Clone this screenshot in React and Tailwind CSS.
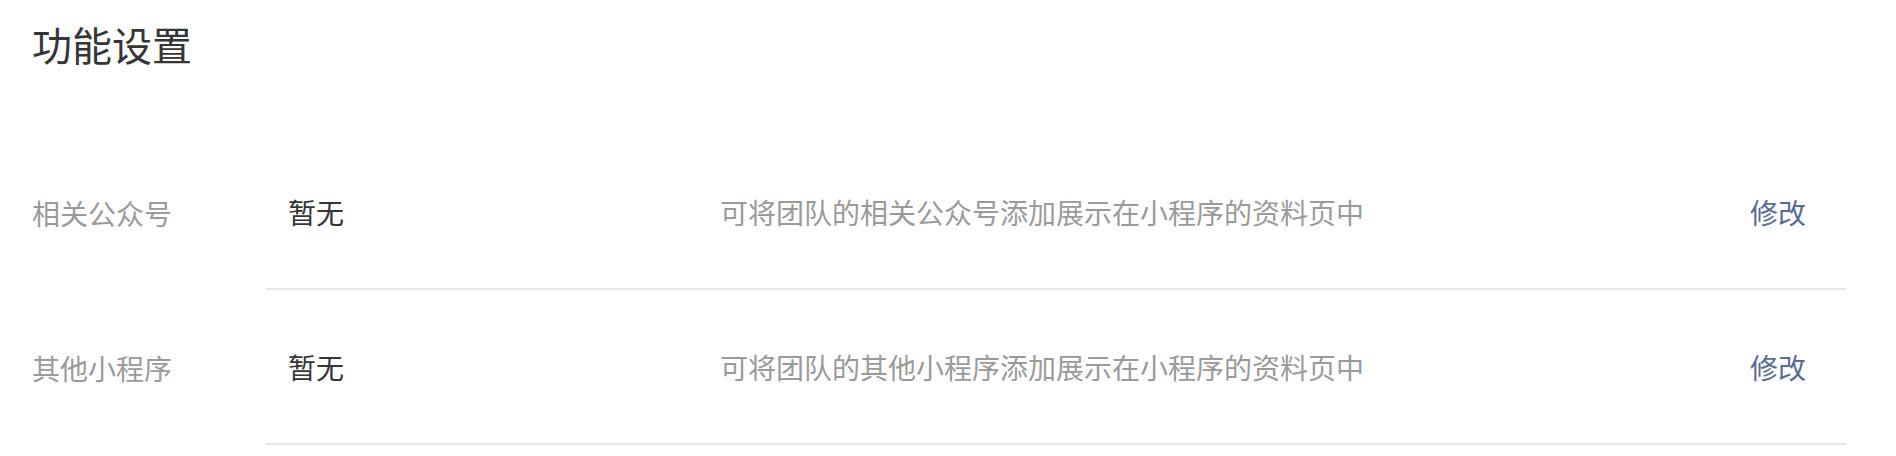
import React from 'react';

const rows = [
  { label: '相关公众号', value: '暂无', desc: '可将团队的相关公众号添加展示在小程序的资料页中' },
  { label: '其他小程序', value: '暂无', desc: '可将团队的其他小程序添加展示在小程序的资料页中' },
];

const FeatureRow = ({ label, value, desc }) => (
  <div className="flex">
    <div className="w-[234px] shrink-0 flex items-center text-[28px] text-[#9a9a9a]">{label}</div>
    <div className="flex-1 h-[155px] flex items-center border-b-2 border-[#e7e7eb] pl-[22px] pr-[40px] text-[28px]">
      <span className="w-[432px] shrink-0 text-[#353535]">{value}</span>
      <span className="flex-1 text-[#9a9a9a]">{desc}</span>
      <a href="#" className="text-[#576b95]">修改</a>
    </div>
  </div>
);

export default function App() {
  return (
    <div
      className="bg-white w-full min-h-[456px] pl-[32px] pr-[50px] pt-[24px]"
      style={{ fontFamily: '"Noto Sans CJK SC", "Noto Sans", sans-serif' }}
    >
      <h1 className="text-[40px] leading-[40px] font-normal text-[#353535]">功能设置</h1>
      <div className="mt-[71px]">
        {rows.map((r) => (
          <FeatureRow key={r.label} {...r} />
        ))}
      </div>
    </div>
  );
}
